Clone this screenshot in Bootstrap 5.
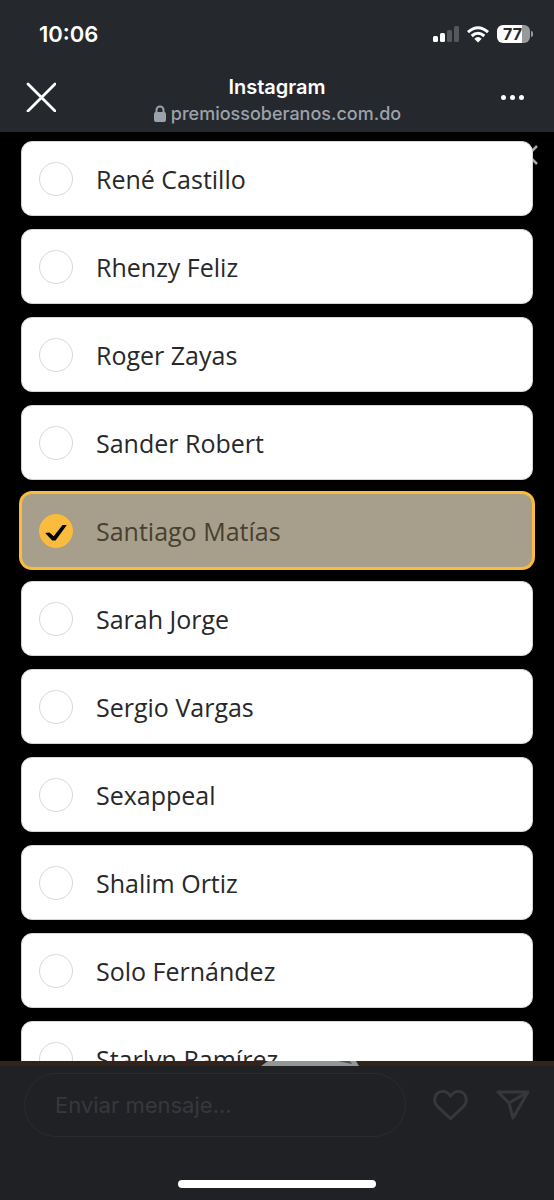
<!DOCTYPE html>
<html lang="es">
<head>
<meta charset="utf-8">
<meta name="viewport" content="width=device-width, initial-scale=1">
<title>Premios Soberano</title>
<link href="https://cdn.jsdelivr.net/npm/bootstrap@5.3.0/dist/css/bootstrap.min.css" rel="stylesheet">
<style>
  body { font-family: Inter, "Liberation Sans", sans-serif; background: #000; }
  svg { display: block; flex: none; }
  .topbar { background: #25282d; color: #fff; }
  .statusbar { height: 68px; padding: 0 21px 0 39px; }
  .clock { font-size: 22px; line-height: 28px; font-weight: 600; }
  .battery { width: 33px; height: 18px; border-radius: 6px; background: linear-gradient(90deg, #fff 77%, #98999b 77%); color: #25282d; font-size: 16px; line-height: 18px; font-weight: 700; padding-right: 2px; text-align: center; }
  .battery-cap { width: 2px; height: 6px; border-radius: 0 3px 3px 0; background: #98999b; margin-left: 1px; }
  .addressbar { height: 64px; padding: 0 26px; }
  .side { width: 60px; padding-top: 14px; }
  .plain { border: 0; padding: 0; background: none; color: inherit; }
  .app-heading { padding-top: 6px; }
  .app-title { font-size: 20px; line-height: 26px; font-weight: 600; }
  .site { font-size: 18px; line-height: 28px; font-weight: 500; color: #9ba2ac; }
  .ballot { padding: 9px 21px 0; min-height: 0; }
  .dismiss { right: 16px; top: 13px; color: #a8a8a8; }
  .choices { gap: 13px; }
  .choice { flex: none; height: 75px; padding: 0 17px; gap: 23px; background: #fff; border: 1px solid #d5d5d5; border-radius: 11px; color: #28282a; font-family: "Open Sans", "Noto Sans", sans-serif; font-size: 25px; line-height: 34px; }
  .choice .form-check-input { width: 34px; height: 34px; margin: 0; flex: none; border: 1px solid #d8d8d8; background-color: #fff; }
  .choice .form-check-input:checked { border-color: #fbbc3d; background-color: #fbbc3d; background-size: 100%; background-image: url("data:image/svg+xml,%3Csvg xmlns='http://www.w3.org/2000/svg' viewBox='0 0 34 34'%3E%3Cpath d='M5.500 19L10 18.500l4.500 4L24 10.500h4.500L16.500 27h-3.500z'/%3E%3C/svg%3E"); }
  .choice:has(:checked) { background: #a79f8b; color: #484030; border-color: #fbbc3d; box-shadow: 0 0 0 2px #fbbc3d; }
  .backdrop-strip { height: 5px; background: #35231a; }
  .backdrop-strip svg { width: 100%; height: 5px; }
  .composer { background: #202125; color: #37383c; padding: 7px 24px 12px; }
  .message { height: 64px; border: 1px solid #2a2b2f; border-radius: 32px; background: none; color: #37383c; padding: 0 30px; font-size: 22px; min-width: 0; }
  .message::placeholder { color: #37383c; opacity: 1; }
  .actions { gap: 28px; padding-left: 27px; }
  .home-line { width: 198px; height: 8px; margin-top: 43px; border-radius: 4px; background: #fff; }
</style>
</head>
<body class="vh-100 d-flex flex-column overflow-hidden">
<header class="topbar">
  <div class="statusbar d-flex align-items-center justify-content-between">
    <span class="clock">10:06</span>
    <div class="d-flex align-items-center">
      <svg width="26" height="16" viewBox="0 0 26 16" fill="#fff"><rect y="10" width="5" height="6" rx="1.5"/><rect x="7" y="7" width="5" height="9" rx="1.5"/><g fill="#55575c"><rect x="14" y="4" width="5" height="12" rx="1.5"/><rect x="21" width="5" height="16" rx="1.5"/></g></svg>
      <svg class="mx-2" width="22" height="17" viewBox="0 0 22 17" fill="none" stroke="#fff" stroke-width="3"><path d="M1 6.2Q11-2.7 21 6.2M4.700 10Q11 4.500 17.300 10"/><path d="M7.300 12.700Q11 9.500 14.700 12.700L11 16.500z" fill="#fff" stroke="none"/></svg>
      <span class="battery">77</span><span class="battery-cap"></span>
    </div>
  </div>
  <div class="addressbar d-flex justify-content-between align-items-start">
    <div class="side"><button class="plain d-block" aria-label="Cerrar"><svg width="30" height="30" viewBox="0 0 30 30" stroke="#fff" stroke-width="2.800" stroke-linecap="round"><path d="M2 2l27 27M29 2L2 29"/></svg></button></div>
    <div class="app-heading text-center">
      <div class="app-title">Instagram</div>
      <div class="site d-flex align-items-center justify-content-center"><svg class="me-1" width="14" height="18" viewBox="0 0 14 18"><rect x="1" y="7" width="12" height="10" rx="2" fill="#9ba2ac"/><path d="M3.500 8V5a3.500 3.500 0 017 0v3" fill="none" stroke="#9ba2ac" stroke-width="2"/></svg>premiossoberanos.com.do</div>
    </div>
    <div class="side d-flex justify-content-end"><button class="plain d-block" aria-label="Más opciones"><svg width="27" height="30" viewBox="0 0 27 30" fill="#fff"><circle cx="2.500" cy="15.500" r="2.500"/><circle cx="11.500" cy="15.500" r="2.500"/><circle cx="20.500" cy="15.500" r="2.500"/></svg></button></div>
  </div>
</header>

<main class="ballot flex-fill position-relative overflow-hidden">
  <button class="plain dismiss position-absolute" aria-label="Cerrar votación"><svg width="20" height="20" viewBox="0 0 20 20" stroke="currentColor" stroke-width="2.500"><path d="M1 1l18 18M19 1L1 19"/></svg></button>
  <form class="choices d-flex flex-column position-relative">
    <label class="choice d-flex align-items-center"><input class="form-check-input" type="radio" name="voto">René Castillo</label>
    <label class="choice d-flex align-items-center"><input class="form-check-input" type="radio" name="voto">Rhenzy Feliz</label>
    <label class="choice d-flex align-items-center"><input class="form-check-input" type="radio" name="voto">Roger Zayas</label>
    <label class="choice d-flex align-items-center"><input class="form-check-input" type="radio" name="voto">Sander Robert</label>
    <label class="choice d-flex align-items-center"><input class="form-check-input" type="radio" name="voto" checked>Santiago Matías</label>
    <label class="choice d-flex align-items-center"><input class="form-check-input" type="radio" name="voto">Sarah Jorge</label>
    <label class="choice d-flex align-items-center"><input class="form-check-input" type="radio" name="voto">Sergio Vargas</label>
    <label class="choice d-flex align-items-center"><input class="form-check-input" type="radio" name="voto">Sexappeal</label>
    <label class="choice d-flex align-items-center"><input class="form-check-input" type="radio" name="voto">Shalim Ortiz</label>
    <label class="choice d-flex align-items-center"><input class="form-check-input" type="radio" name="voto">Solo Fernández</label>
    <label class="choice d-flex align-items-center"><input class="form-check-input" type="radio" name="voto">Starlyn Ramírez</label>
  </form>
</main>

<div class="backdrop-strip"><svg viewBox="0 0 554 5" preserveAspectRatio="none"><path d="M261 5L268 0H356L359 5z" fill="#929695"/><path d="M338 0h12l2 3z" fill="#4b5356"/></svg></div>
<footer class="composer">
  <div class="d-flex align-items-center">
    <input class="message flex-fill" type="text" placeholder="Enviar mensaje..." aria-label="Enviar mensaje">
    <div class="actions d-flex align-items-center">
      <button class="plain" aria-label="Me gusta"><svg width="35" height="32" viewBox="0 0 36 32" fill="none" stroke="currentColor" stroke-width="3" stroke-linejoin="round"><path d="M18 30L5 18C-1 12 2 2 10 2c4 0 6 2 8 5 2-3 4-5 8-5 8 0 11 10 5 16z"/></svg></button>
      <button class="plain" aria-label="Compartir"><svg width="34" height="30" viewBox="0 0 34 30" fill="none" stroke="currentColor" stroke-width="3" stroke-linejoin="round"><path d="M2 2H32L17 28L13 13zM13 13L32 2"/></svg></button>
    </div>
  </div>
  <div class="home-line mx-auto"></div>
</footer>
<script src="https://cdn.jsdelivr.net/npm/bootstrap@5.3.0/dist/js/bootstrap.bundle.min.js"></script>
</body>
</html>
